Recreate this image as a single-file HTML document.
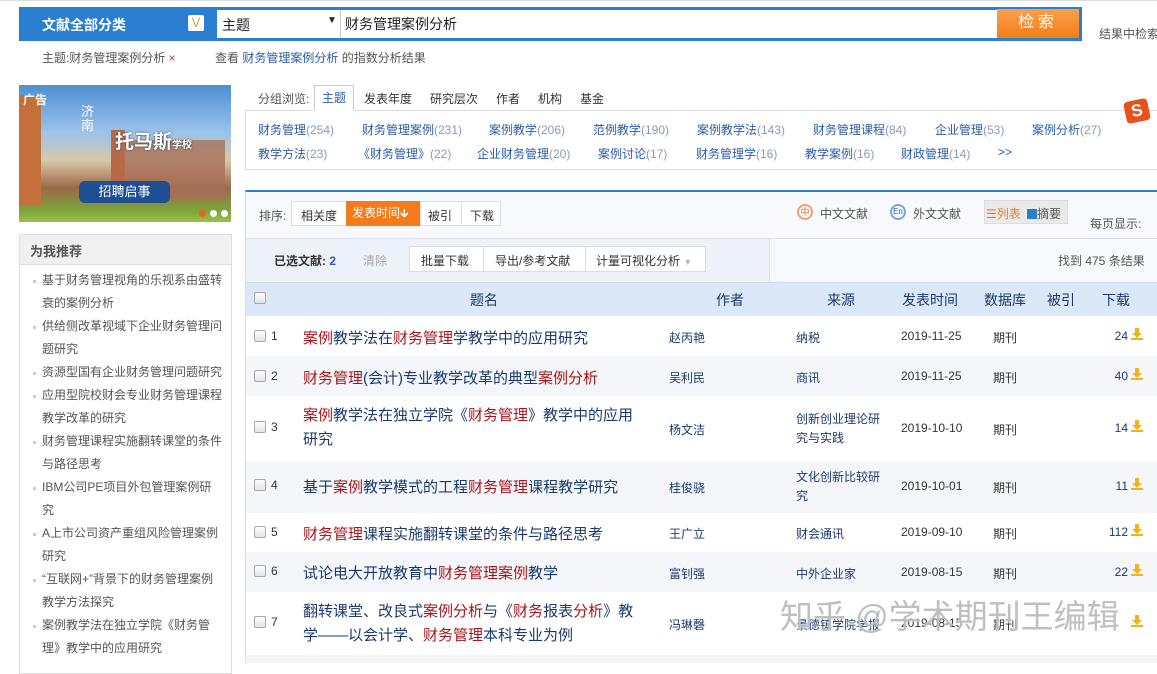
<!DOCTYPE html>
<html><head><meta charset="utf-8"><style>
*{margin:0;padding:0;box-sizing:border-box}
body{width:1157px;height:663px;overflow:hidden;background:#fff;font-family:"Liberation Sans","Noto Sans CJK SC",sans-serif;font-size:12px;color:#333;position:relative}
.a{position:absolute;white-space:nowrap}
.r{color:#a8141a}
.t{color:#1a3a6e}
.kw{color:#2a5caa}
.kw i{font-style:normal;color:#8a9ab8}
.cb{position:absolute;width:12px;height:12px;border:1px solid #a8a8a8;border-radius:2px;background:linear-gradient(#fdfdfd,#e4e4e4)}
.dl{position:absolute;width:12px;height:12px}
.rec{position:relative}
.rec:before{content:"";position:absolute;left:-9px;top:11px;width:3px;height:3px;background:#ccc}
</style></head><body>
<div class="a" style="left:0;top:0;width:1157px;height:4px;border-top:1px solid #d8dde5"></div>
<div class="a" style="left:19px;top:7px;width:1063px;height:34px;background:#2b7fd0;border:1px solid #2b7fd0"></div>
<div class="a" style="left:42px;top:15px;color:#fff;font-size:14px;font-weight:bold">文献全部分类</div>
<div class="a" style="left:188px;top:15px;width:16px;height:16px;background:#fff;border-radius:2px;color:#e48a1c;font-size:10px;text-align:center;line-height:16px">&#8897;</div>
<div class="a" style="left:217px;top:10px;width:124px;height:28px;background:#fff;border-right:1px solid #ccc"></div>
<div class="a" style="left:222px;top:15px;font-size:14px;color:#222">主题</div>
<div class="a" style="left:327px;top:15px;font-size:10px;color:#222">▼</div>
<div class="a" style="left:341px;top:10px;width:656px;height:28px;background:#fff"></div>
<div class="a" style="left:345px;top:14px;font-size:14px;color:#222">财务管理案例分析</div>
<div class="a" style="left:997px;top:9px;width:82px;height:29px;background:linear-gradient(#fba04a,#f47d18);color:#fff;font-size:16px;text-align:center;line-height:28px;letter-spacing:4px">检索</div>
<div class="a" style="left:1099px;top:25px;color:#555">结果中检索</div>
<div class="a" style="left:42px;top:49px;color:#555">主题:财务管理案例分析 <span style="color:#c33">×</span></div>
<div class="a" style="left:215px;top:49px;color:#555">查看 <span style="color:#2a5caa">财务管理案例分析</span> 的指数分析结果</div>
<div class="a" style="left:19px;top:85px;width:212px;height:137px;background:linear-gradient(180deg,#4d8fd4 0%,#9cc4ea 35%,#d8c8a8 55%,#9a6a48 75%,#7aa63a 92%,#9dc04a 100%);overflow:hidden">
 <div class="a" style="left:0;top:10px;width:22px;height:110px;background:#c3703a"></div>
 <div class="a" style="left:92px;top:45px;width:14px;height:70px;background:#b66a48"></div>
 <div class="a" style="left:106px;top:55px;width:100px;height:60px;background:#a7705a;opacity:.8"></div>
 <div class="a" style="left:4px;top:6px;color:#fff;font-weight:bold;font-size:12px">广告</div>
 <div class="a" style="left:62px;top:20px;color:#fff;font-size:13px;line-height:14px;white-space:normal;width:14px">济南</div>
 <div class="a" style="left:96px;top:42px;color:#fff;font-weight:bold;font-size:19px;text-shadow:0 0 2px #234">托马斯<span style="font-size:10px">学校</span></div>
 <div class="a" style="left:60px;top:96px;width:91px;height:22px;background:#1f4f93;border-radius:6px;color:#fff;font-size:13px;text-align:center;line-height:22px">招聘启事</div>
 <div class="a" style="left:180px;top:125px;width:7px;height:7px;border-radius:50%;background:#f06020"></div>
 <div class="a" style="left:191px;top:125px;width:7px;height:7px;border-radius:50%;background:#fff"></div>
 <div class="a" style="left:202px;top:125px;width:7px;height:7px;border-radius:50%;background:#fff"></div>
</div>
<div class="a" style="left:19px;top:234px;width:213px;height:440px;border:1px solid #ddd"></div>
<div class="a" style="left:20px;top:235px;width:211px;height:30px;background:#f0f0f0;border-bottom:1px solid #ddd"></div>
<div class="a" style="left:30px;top:241px;font-size:13px;font-weight:bold;color:#555">为我推荐</div>
<div class="a" style="left:42px;top:269px;width:182px;white-space:normal;line-height:23px;color:#555;font-size:12px">
<div class="rec">基于财务管理视角的乐视系由盛转衰的案例分析</div>
<div class="rec">供给侧改革视域下企业财务管理问题研究</div>
<div class="rec">资源型国有企业财务管理问题研究</div>
<div class="rec">应用型院校财会专业财务管理课程教学改革的研究</div>
<div class="rec">财务管理课程实施翻转课堂的条件与路径思考</div>
<div class="rec">IBM公司PE项目外包管理案例研<br>究</div>
<div class="rec">A上市公司资产重组风险管理案例<br>研究</div>
<div class="rec">“互联网+”背景下的财务管理案例<br>教学方法探究</div>
<div class="rec">案例教学法在独立学院《财务管<br>理》教学中的应用研究</div>
</div>
<div class="a" style="left:258px;top:90px;color:#555">分组浏览:</div>
<div class="a" style="left:314px;top:85px;width:40px;height:26px;border:1px solid #ccc;border-bottom:1px solid #fff;background:#fff;z-index:2;color:#2a5caa;text-align:center;line-height:24px">主题</div>
<div class="a" style="left:364px;top:90px;color:#333">发表年度</div>
<div class="a" style="left:430px;top:90px;color:#333">研究层次</div>
<div class="a" style="left:496px;top:90px;color:#333">作者</div>
<div class="a" style="left:538px;top:90px;color:#333">机构</div>
<div class="a" style="left:580px;top:90px;color:#333">基金</div>
<div class="a" style="left:245px;top:110px;width:920px;height:60px;border:1px solid #ddd;border-right:none"></div>
<div class="a kw" style="left:258px;top:121px">财务管理<i>(254)</i></div>
<div class="a kw" style="left:362px;top:121px">财务管理案例<i>(231)</i></div>
<div class="a kw" style="left:489px;top:121px">案例教学<i>(206)</i></div>
<div class="a kw" style="left:593px;top:121px">范例教学<i>(190)</i></div>
<div class="a kw" style="left:697px;top:121px">案例教学法<i>(143)</i></div>
<div class="a kw" style="left:813px;top:121px">财务管理课程<i>(84)</i></div>
<div class="a kw" style="left:935px;top:121px">企业管理<i>(53)</i></div>
<div class="a kw" style="left:1032px;top:121px">案例分析<i>(27)</i></div>
<div class="a kw" style="left:258px;top:145px">教学方法<i>(23)</i></div>
<div class="a kw" style="left:358px;top:145px">《财务管理》<i>(22)</i></div>
<div class="a kw" style="left:477px;top:145px">企业财务管理<i>(20)</i></div>
<div class="a kw" style="left:598px;top:145px">案例讨论<i>(17)</i></div>
<div class="a kw" style="left:696px;top:145px">财务管理学<i>(16)</i></div>
<div class="a kw" style="left:805px;top:145px">教学案例<i>(16)</i></div>
<div class="a kw" style="left:901px;top:145px">财政管理<i>(14)</i></div>
<div class="a kw" style="left:998px;top:145px">&gt;&gt;</div>
<div class="a" style="left:1125px;top:100px;width:24px;height:22px;background:#e8501c;border-radius:4px;transform:rotate(-12deg);color:#fff;font-weight:bold;font-size:17px;text-align:center;line-height:22px">S</div>
<div class="a" style="left:245px;top:190px;width:912px;height:48px;background:#f7f9fc;border-top:2px solid #2b7fd0;border-left:1px solid #ddd"></div>
<div class="a" style="left:259px;top:207px;color:#555">排序:</div>
<div class="a" style="left:291px;top:201px;width:210px;height:25px;border:1px solid #ddd;background:#fff"></div>
<div class="a" style="left:301px;top:207px">相关度</div>
<div class="a" style="left:346px;top:201px;width:74px;height:25px;background:#f47a1c;color:#fff;line-height:25px;padding-left:6px">发表时间&#x1F873;</div>
<div class="a" style="left:420px;top:201px;width:1px;height:25px;background:#ddd"></div>
<div class="a" style="left:428px;top:207px">被引</div>
<div class="a" style="left:461px;top:201px;width:1px;height:25px;background:#ddd"></div>
<div class="a" style="left:470px;top:207px">下载</div>
<div class="a" style="left:797px;top:204px;width:16px;height:16px;border:2px solid #f0a070;border-radius:50%;color:#e07030;font-size:9px;text-align:center;line-height:12px">中</div>
<div class="a" style="left:820px;top:205px;color:#555">中文文献</div>
<div class="a" style="left:890px;top:204px;width:16px;height:16px;border:2px solid #7aa6d8;border-radius:50%;color:#2a5caa;font-size:8px;text-align:center;line-height:12px">En</div>
<div class="a" style="left:913px;top:205px;color:#555">外文文献</div>
<div class="a" style="left:984px;top:200px;width:84px;height:24px;border:1px solid #ddd;background:#eaeaea"></div>
<div class="a" style="left:986px;top:205px;color:#f07a20">☰列表</div>
<div class="a" style="left:1027px;top:205px;color:#555"><span style="display:inline-block;width:10px;height:10px;background:#2b7fd0;vertical-align:-1px"></span>摘要</div>
<div class="a" style="left:1090px;top:215px;color:#555">每页显示:</div>
<div class="a" style="left:245px;top:238px;width:524px;height:44px;background:#edf2f9;border-left:1px solid #ddd;border-top:1px solid #dde3ec"></div>
<div class="a" style="left:769px;top:238px;width:388px;height:44px;background:#f7f9fc;border-top:1px solid #dde3ec;border-left:1px solid #dde3ec"></div>
<div class="a" style="left:274px;top:252px;font-weight:bold;color:#333">已选文献: <span style="color:#2a5caa">2</span></div>
<div class="a" style="left:363px;top:252px;color:#aaa">清除</div>
<div class="a" style="left:409px;top:246px;width:297px;height:26px;border:1px solid #ddd;background:#fff"></div>
<div class="a" style="left:421px;top:252px">批量下载</div>
<div class="a" style="left:483px;top:246px;width:1px;height:26px;background:#ddd"></div>
<div class="a" style="left:495px;top:252px">导出/参考文献</div>
<div class="a" style="left:585px;top:246px;width:1px;height:26px;background:#ddd"></div>
<div class="a" style="left:596px;top:252px">计量可视化分析 <span style="color:#bbb;font-size:9px">▼</span></div>
<div class="a" style="left:1058px;top:252px;color:#555">找到 475 条结果</div>
<div class="a" style="left:245px;top:282px;width:912px;height:34px;background:#dbe8f8;border-top:1px solid #cdd9ea;border-left:1px solid #ddd"></div>
<div class="cb" style="left:254px;top:292px"></div>
<div class="a t" style="left:470px;top:290px;font-size:14px">题名</div>
<div class="a t" style="left:716px;top:290px;font-size:14px">作者</div>
<div class="a t" style="left:827px;top:290px;font-size:14px">来源</div>
<div class="a t" style="left:902px;top:290px;font-size:14px">发表时间</div>
<div class="a t" style="left:984px;top:290px;font-size:14px">数据库</div>
<div class="a t" style="left:1047px;top:290px;font-size:14px">被引</div>
<div class="a t" style="left:1102px;top:290px;font-size:14px">下载</div>
<div class="a" style="left:245px;top:356px;width:912px;height:40px;background:#f4f6fa"></div>
<div class="a" style="left:245px;top:461px;width:912px;height:52px;background:#f4f6fa"></div>
<div class="a" style="left:245px;top:552px;width:912px;height:40px;background:#f4f6fa"></div>
<div class="a" style="left:245px;top:655px;width:912px;height:8px;background:#f4f6fa"></div>
<div class="a" style="left:245px;top:316px;width:1px;height:347px;background:#ddd"></div>

<div class="cb" style="left:254px;top:330px"></div><div class="a" style="left:271px;top:329px">1</div>
<div class="a t" style="left:303px;top:327px;font-size:15px"><span class="r">案例</span>教学法在<span class="r">财务管理</span>学教学中的应用研究</div>
<div class="a t" style="left:669px;top:329px">赵丙艳</div><div class="a t" style="left:796px;top:329px">纳税</div>
<div class="a" style="left:901px;top:329px">2019-11-25</div><div class="a" style="left:993px;top:329px">期刊</div>
<div class="a t" style="left:1100px;top:329px;width:28px;text-align:right">24</div>

<div class="cb" style="left:254px;top:370px"></div><div class="a" style="left:271px;top:369px">2</div>
<div class="a t" style="left:303px;top:367px;font-size:15px"><span class="r">财务管理</span>(会计)专业教学改革的典型<span class="r">案例分析</span></div>
<div class="a t" style="left:669px;top:369px">吴利民</div><div class="a t" style="left:796px;top:369px">商讯</div>
<div class="a" style="left:901px;top:369px">2019-11-25</div><div class="a" style="left:993px;top:369px">期刊</div>
<div class="a t" style="left:1100px;top:369px;width:28px;text-align:right">40</div>

<div class="cb" style="left:254px;top:421px"></div><div class="a" style="left:271px;top:420px">3</div>
<div class="a t" style="left:303px;top:404px;font-size:15px;line-height:24px"><span class="r">案例</span>教学法在独立学院《<span class="r">财务管理</span>》教学中的应用<br>研究</div>
<div class="a t" style="left:669px;top:421px">杨文洁</div><div class="a t" style="left:796px;top:410px;line-height:19px">创新创业理论研<br>究与实践</div>
<div class="a" style="left:901px;top:421px">2019-10-10</div><div class="a" style="left:993px;top:421px">期刊</div>
<div class="a t" style="left:1100px;top:421px;width:28px;text-align:right">14</div>

<div class="cb" style="left:254px;top:479px"></div><div class="a" style="left:271px;top:478px">4</div>
<div class="a t" style="left:303px;top:476px;font-size:15px">基于<span class="r">案例</span>教学模式的工程<span class="r">财务管理</span>课程教学研究</div>
<div class="a t" style="left:669px;top:479px">桂俊骁</div><div class="a t" style="left:796px;top:468px;line-height:19px">文化创新比较研<br>究</div>
<div class="a" style="left:901px;top:479px">2019-10-01</div><div class="a" style="left:993px;top:479px">期刊</div>
<div class="a t" style="left:1100px;top:479px;width:28px;text-align:right">11</div>

<div class="cb" style="left:254px;top:526px"></div><div class="a" style="left:271px;top:525px">5</div>
<div class="a t" style="left:303px;top:523px;font-size:15px"><span class="r">财务管理</span>课程实施翻转课堂的条件与路径思考</div>
<div class="a t" style="left:669px;top:525px">王广立</div><div class="a t" style="left:796px;top:525px">财会通讯</div>
<div class="a" style="left:901px;top:525px">2019-09-10</div><div class="a" style="left:993px;top:525px">期刊</div>
<div class="a t" style="left:1100px;top:525px;width:28px;text-align:right">112</div>

<div class="cb" style="left:254px;top:565px"></div><div class="a" style="left:271px;top:564px">6</div>
<div class="a t" style="left:303px;top:562px;font-size:15px">试论电大开放教育中<span class="r">财务管理案例</span>教学</div>
<div class="a t" style="left:669px;top:565px">富钊强</div><div class="a t" style="left:796px;top:565px">中外企业家</div>
<div class="a" style="left:901px;top:565px">2019-08-15</div><div class="a" style="left:993px;top:565px">期刊</div>
<div class="a t" style="left:1100px;top:565px;width:28px;text-align:right">22</div>

<div class="cb" style="left:254px;top:616px"></div><div class="a" style="left:271px;top:615px">7</div>
<div class="a t" style="left:303px;top:600px;font-size:15px;line-height:24px">翻转课堂、改良式<span class="r">案例分析</span>与《<span class="r">财务</span>报表<span class="r">分析</span>》教<br>学——以会计学、<span class="r">财务管理</span>本科专业为例</div>
<div class="a t" style="left:669px;top:616px">冯琳磬</div><div class="a t" style="left:796px;top:616px">景德镇学院学报</div>
<div class="a" style="left:901px;top:616px">2019-08-15</div><div class="a" style="left:993px;top:616px">期刊</div>

<svg class="dl" style="left:1131px;top:328px" viewBox="0 0 12 12"><path d="M4 0h4v5h3L6 10 1 5h3z" fill="#f0b418"/><rect x="0" y="10" width="12" height="2" fill="#f0b418"/></svg>
<svg class="dl" style="left:1131px;top:368px" viewBox="0 0 12 12"><path d="M4 0h4v5h3L6 10 1 5h3z" fill="#f0b418"/><rect x="0" y="10" width="12" height="2" fill="#f0b418"/></svg>
<svg class="dl" style="left:1131px;top:420px" viewBox="0 0 12 12"><path d="M4 0h4v5h3L6 10 1 5h3z" fill="#f0b418"/><rect x="0" y="10" width="12" height="2" fill="#f0b418"/></svg>
<svg class="dl" style="left:1131px;top:478px" viewBox="0 0 12 12"><path d="M4 0h4v5h3L6 10 1 5h3z" fill="#f0b418"/><rect x="0" y="10" width="12" height="2" fill="#f0b418"/></svg>
<svg class="dl" style="left:1131px;top:524px" viewBox="0 0 12 12"><path d="M4 0h4v5h3L6 10 1 5h3z" fill="#f0b418"/><rect x="0" y="10" width="12" height="2" fill="#f0b418"/></svg>
<svg class="dl" style="left:1131px;top:564px" viewBox="0 0 12 12"><path d="M4 0h4v5h3L6 10 1 5h3z" fill="#f0b418"/><rect x="0" y="10" width="12" height="2" fill="#f0b418"/></svg>
<svg class="dl" style="left:1131px;top:615px" viewBox="0 0 12 12"><path d="M4 0h4v5h3L6 10 1 5h3z" fill="#f0b418"/><rect x="0" y="10" width="12" height="2" fill="#f0b418"/></svg>

<div class="a" style="left:780px;top:590px;font-size:33px;color:rgba(170,170,170,.75);text-shadow:0 0 1px #fff">知乎 @学术期刊王编辑</div>
</body></html>
